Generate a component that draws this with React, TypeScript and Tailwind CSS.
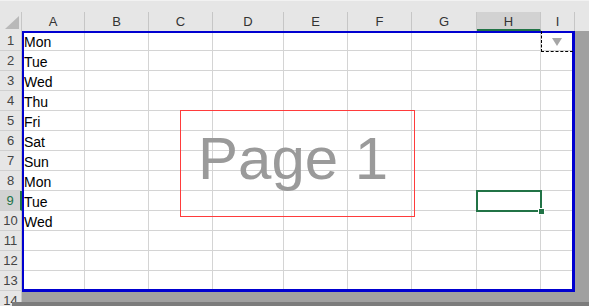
import React from "react";

const cols = [
  { label: "A", w: "w-[63px]" },
  { label: "B", w: "w-[64px]" },
  { label: "C", w: "w-[64px]" },
  { label: "D", w: "w-[71px]" },
  { label: "E", w: "w-[64px]" },
  { label: "F", w: "w-[64px]" },
  { label: "G", w: "w-[65px]" },
  { label: "H", w: "w-[64px]" },
  { label: "I", w: "w-[34px]" },
];

const days = ["Mon", "Tue", "Wed", "Thu", "Fri", "Sat", "Sun", "Mon", "Tue", "Wed"];

function RowHeader({ n, active }: { n: number; active?: boolean }) {
  return (
    <div
      className={
        "flex h-[20px] w-[22px] shrink-0 items-center justify-center border-b border-[#d0d0d0] text-[13px] " +
        (active ? "border-r-2 border-r-[#217346] bg-[#d2d2d2] text-[#217346]" : "border-r border-r-[#c6c6c6] bg-[#e6e6e6] text-[#444]")
      }
    >
      {n}
    </div>
  );
}

export default function App() {
  return (
    <div className="relative h-[306px] w-[589px] overflow-hidden bg-[#e6e6e6] font-['Liberation_Sans',Arial,sans-serif]">
      <div className="h-[12px] border-t border-[#f2f2f2] bg-[#e6e6e6]" />

      {/* column headers */}
      <div className="flex h-[19px]">
        <div className="relative h-[19px] w-[22px] shrink-0 border-r border-[#c6c6c6]">
          <svg className="absolute left-[5px] top-[4px]" width="14" height="13" viewBox="0 0 14 13">
            <polygon points="14,0 14,13 0,13" fill="#b9b9b9" />
          </svg>
        </div>
        {cols.map((c) => (
          <div
            key={c.label}
            className={
              c.w +
              " flex shrink-0 items-center justify-center border-r border-[#c6c6c6] text-[13px] text-[#333] " +
              (c.label === "H" ? "border-b-2 border-b-[#217346] bg-[#d2d2d2] pt-[2px]" : "")
            }
          >
            {c.label}
          </div>
        ))}
        <div className="flex-1 bg-[#e6e6e6]" />
      </div>

      {/* rows */}
      {Array.from({ length: 13 }).map((_, i) => (
        <div key={i} className="flex h-[20px]">
          <RowHeader n={i + 1} active={i === 8} />
          {cols.map((c, j) => (
            <div
              key={c.label}
              className={c.w + " h-[20px] shrink-0 border-b border-r border-[#d4d4d4] bg-white pl-[2px] pt-[2px] text-[14px] leading-[18px] text-black"}
            >
              {j === 0 ? days[i] ?? "" : ""}
            </div>
          ))}
          <div className="flex-1 bg-[#a0a0a0]" />
        </div>
      ))}
      <div className="flex h-[20px]">
        <RowHeader n={14} />
        <div className="flex-1 bg-[#a0a0a0]" />
      </div>

      {/* print area border */}
      <div className="absolute left-[22px] top-[31px] h-[261px] w-[553px] border-b-[3px] border-l-2 border-r-[3px] border-t-2 border-[#0000d0]" />

      {/* page-end marker in I1 */}
      <div className="absolute left-[541px] top-[31px] h-[21px] w-[32px] border-b border-l border-dashed border-black" />
      <svg className="absolute left-[552px] top-[38px]" width="10" height="8" viewBox="0 0 10 8">
        <polygon points="0,0 10,0 5,8" fill="#a6a6a6" />
      </svg>

      {/* page watermark */}
      <div className="absolute left-[180px] top-[110px] h-[107px] w-[235px] border border-[#ff3b3b]" />
      <div className="absolute left-[198px] top-[129px] text-[60px] leading-[60px] text-[#9a9a9a]">Page 1</div>

      {/* active cell H9 */}
      <div className="absolute left-[476px] top-[190px] h-[22px] w-[66px] border-2 border-[#217346]" />
      <div className="absolute left-[538px] top-[208px] h-[7px] w-[7px] border border-white bg-[#217346]" />

      {/* window shadow */}
      <div className="absolute bottom-0 left-[12px] right-0 h-[4px] bg-[#7c7c7c]" />
    </div>
  );
}
